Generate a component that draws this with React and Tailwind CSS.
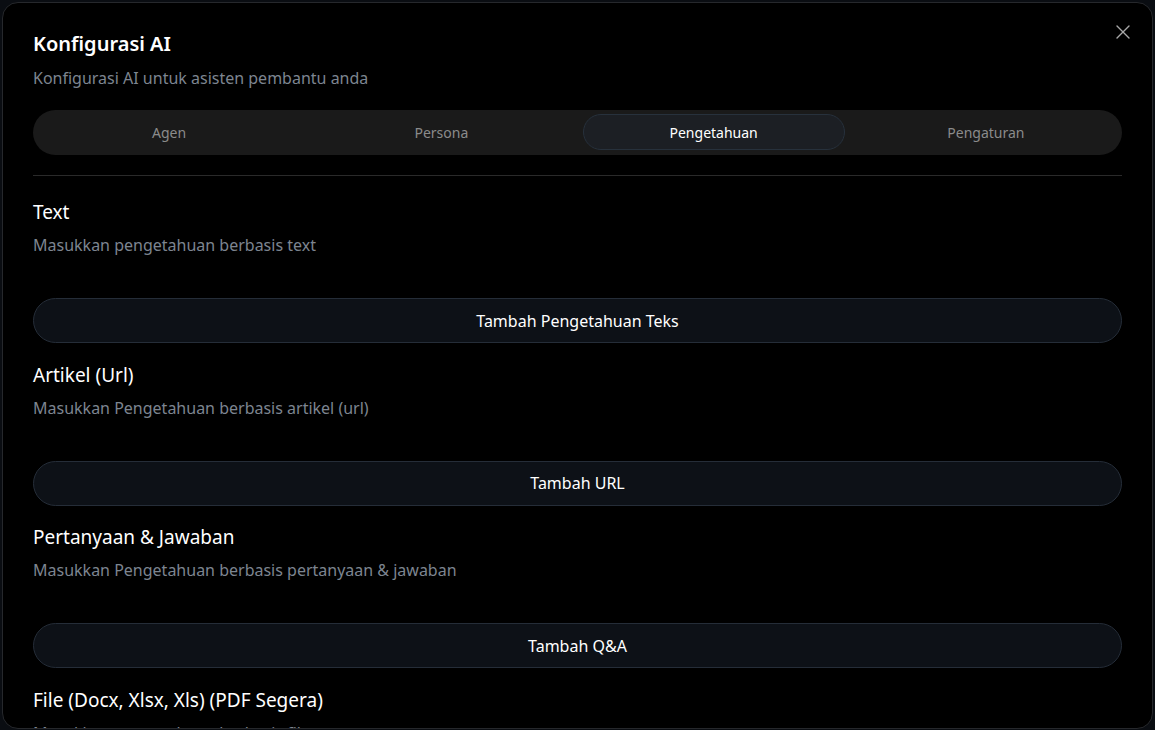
import React, { useState } from 'react';
import { X } from 'lucide-react';

const tabs = ['Agen', 'Persona', 'Pengetahuan', 'Pengaturan'];

const sections = [
  {
    title: 'Text',
    description: 'Masukkan pengetahuan berbasis text',
    action: 'Tambah Pengetahuan Teks'
  },
  {
    title: 'Artikel (Url)',
    description: 'Masukkan Pengetahuan berbasis artikel (url)',
    action: 'Tambah URL'
  },
  {
    title: 'Pertanyaan & Jawaban',
    description: 'Masukkan Pengetahuan berbasis pertanyaan & jawaban',
    action: 'Tambah Q&A'
  },
  {
    title: 'File (Docx, Xlsx, Xls) (PDF Segera)',
    description: 'Masukkan pengetahuan berbasis file',
    action: 'Unggah File'
  }
];

export default function App() {
  const [activeTab, setActiveTab] = useState('Pengetahuan');

  return (
    <div
      className="h-[730px] w-[1155px] overflow-hidden bg-[#0a0d12] p-[2px]"
      style={{ fontFamily: '"Noto Sans", "Open Sans", sans-serif' }}
    >
      <div className="relative h-[727px] overflow-hidden rounded-[16px] border border-[#26282c] bg-black px-[30px] pt-[27px]">
        <button className="absolute right-[17px] top-[17px] text-[#a8a8a8]">
          <X className="h-[24px] w-[24px]" strokeWidth={1.4} />
        </button>

        {/* Header */}
        <h1 className="text-[20px] font-semibold leading-[28px] text-white">Konfigurasi AI</h1>
        <p className="mt-[8px] text-[16px] leading-[24px] text-[#7d8590]">
          Konfigurasi AI untuk asisten pembantu anda
        </p>

        {/* Tabs */}
        <div className="mt-[20px] flex h-[45px] rounded-full bg-[#1a1a1a]">
          {tabs.map((tab) => (
            <button
              key={tab}
              onClick={() => setActiveTab(tab)}
              className="flex flex-1 px-[5px] pb-[5px] pt-[4px]"
            >
              <span
                className={`flex h-full w-full items-center justify-center rounded-full text-[14px] ${
                  activeTab === tab
                    ? 'border border-[#27313c] bg-[#1c1f24] text-white'
                    : 'text-[#8b8b8b]'
                }`}
              >
                {tab}
              </span>
            </button>
          ))}
        </div>

        <div className="mt-[20px] h-px bg-[#2a2a2a]" />

        {/* Knowledge sections */}
        <div className="mt-[22px] flex flex-col">
          {sections.map((s, i) => (
            <div key={s.title} className={i > 0 ? 'mt-[17.5px]' : ''}>
              <h2 className="text-[19px] leading-[28px] text-white">{s.title}</h2>
              <p className="mt-[7px] text-[16px] leading-[24px] text-[#7d8590]">{s.description}</p>
              <button className="mt-[41px] flex h-[45px] w-full items-center justify-center rounded-full border border-[#252d38] bg-[#0d1117] text-[16px] text-white">
                {s.action}
              </button>
            </div>
          ))}
        </div>
      </div>
    </div>
  );
}
